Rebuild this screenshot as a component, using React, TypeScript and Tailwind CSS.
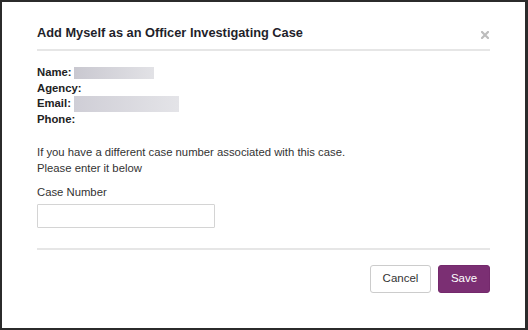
import React from "react";

export default function App() {
  return (
    <div
      className="w-[528px] h-[330px] bg-white border-t-2 border-l-2 border-b-2 border-r-[3px] border-[#2b2b2b] flex flex-col text-[#222]"
      style={{ fontFamily: '"Liberation Sans", Arial, sans-serif' }}
    >
      <div className="px-[35px] pt-[21px]">
        <div className="flex justify-between items-start border-b-2 border-[#e6e6e6] pb-[6px]">
          <h1 className="text-[12.8px] leading-[20px] font-bold text-[#1f1f2b]">
            Add Myself as an Officer Investigating Case
          </h1>
          <button className="mt-[8px] mr-[1px] w-[8px] h-[8px] flex items-center justify-center" aria-label="Close">
            <svg width="8" height="8" viewBox="0 0 8 8">
              <path d="M1 1 L7 7 M7 1 L1 7" stroke="#bdbdbd" strokeWidth="2.2" strokeLinecap="square" />
            </svg>
          </button>
        </div>
      </div>

      <div className="px-[35px] pt-[14px] text-[11.3px]">
        <div className="leading-[15.6px] font-bold text-[#222]">
          <div className="flex items-center">
            <span>Name:</span>
            <span className="ml-[2.5px] inline-block w-[80px] h-[12px] bg-gradient-to-r from-[#c9c8d0] to-[#e2e2e6]" />
          </div>
          <div>Agency:</div>
          <div className="flex items-center">
            <span>Email:</span>
            <span className="ml-[3px] inline-block w-[105px] h-[16px] bg-gradient-to-r from-[#cfced6] to-[#e4e4e8]" />
          </div>
          <div>Phone:</div>
        </div>

        <p className="mt-[16px] leading-[16px] text-[#333]">
          If you have a different case number associated with this case.
          <br />
          Please enter it below
        </p>

        <label className="block mt-[8px] leading-[16px] text-[#333]">Case Number</label>
        <input
          type="text"
          className="block mt-[4px] w-[178px] h-[24px] border border-[#d4d4d4] rounded-[1px] outline-none"
        />
      </div>

      <div className="px-[35px] mt-[20px]">
        <div className="border-t-2 border-[#e6e6e6] pt-[15px] flex justify-end gap-[7px]">
          <button className="w-[61px] h-[28px] border border-[#cccccc] rounded-[3px] bg-white text-[11.5px] text-[#333]">
            Cancel
          </button>
          <button className="w-[52px] h-[28px] rounded-[3px] bg-[#7b2f73] border border-[#74296c] text-[11.5px] text-white">
            Save
          </button>
        </div>
      </div>
    </div>
  );
}
